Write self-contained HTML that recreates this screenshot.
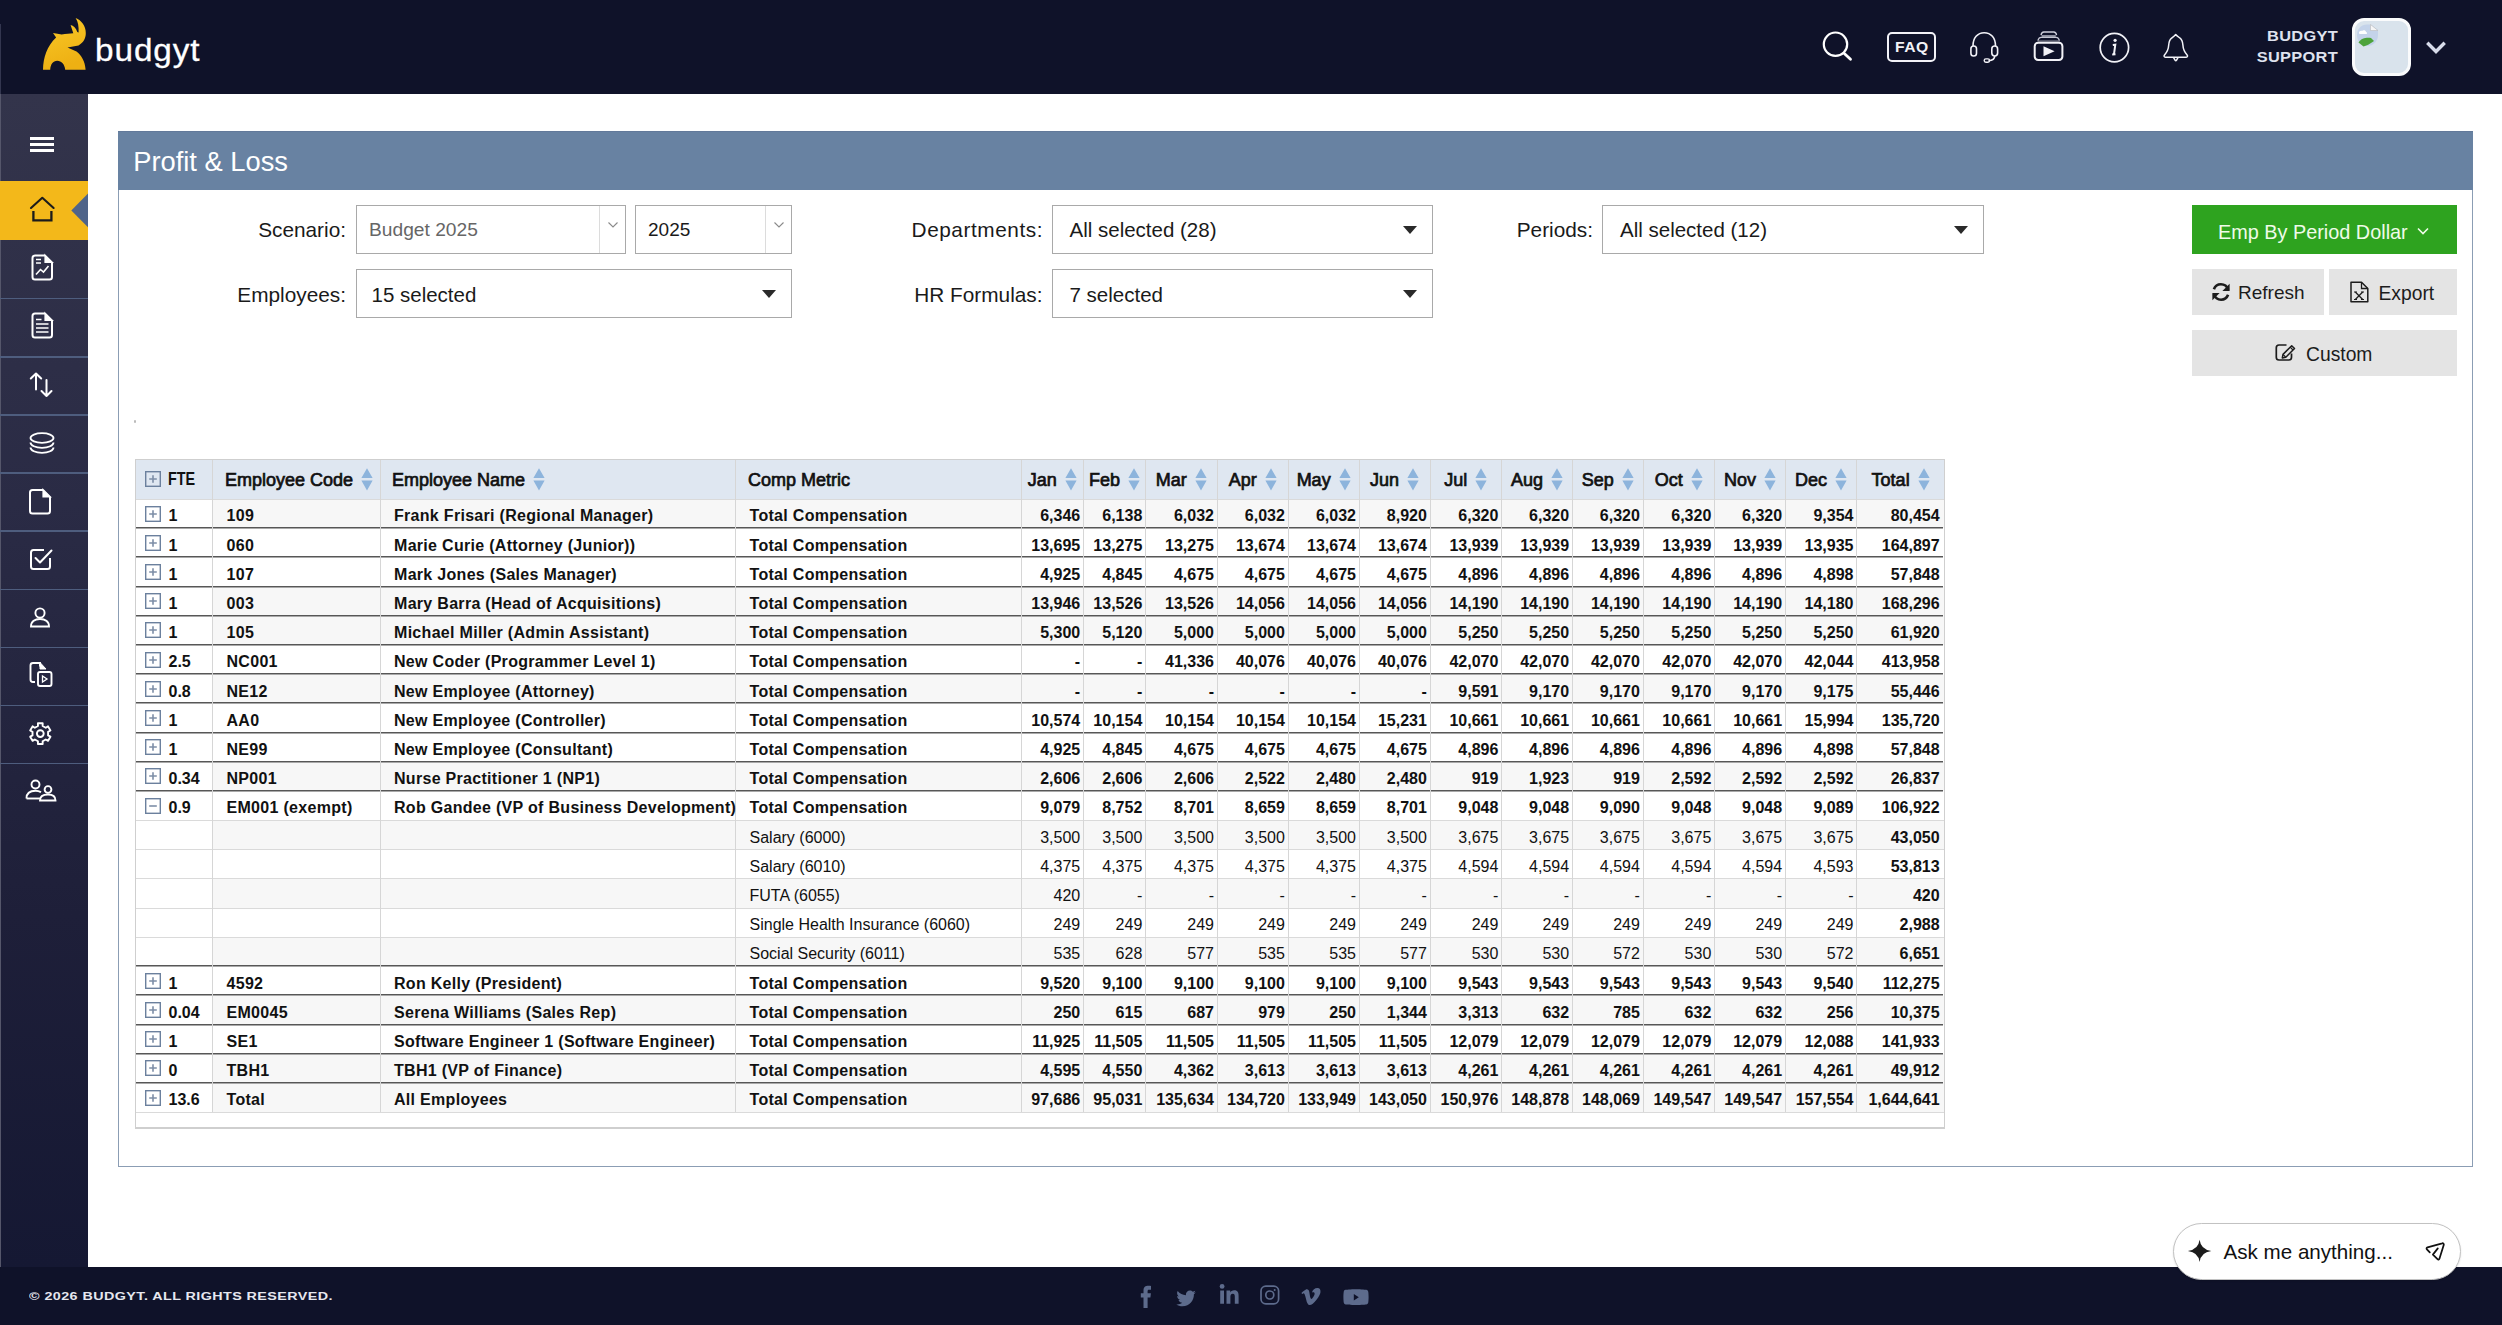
<!DOCTYPE html>
<html><head><meta charset="utf-8"><title>Budgyt - Profit &amp; Loss</title>
<style>
*{margin:0;padding:0;box-sizing:border-box}
html,body{width:2502px;height:1325px;overflow:hidden;background:#fff}
body{position:relative;font-family:"Liberation Sans",sans-serif;color:#111}
.a{position:absolute}
svg{display:block}
#hdr{left:0;top:0;width:2502px;height:94.3px;background:#0f1229}
#side{left:0;top:94.3px;width:88px;height:1172.7px;background:linear-gradient(180deg,#33344b 0%,#2a2b45 35%,#1e1f39 70%,#151833 100%)}
#sideedge{left:0;top:94.3px;width:1.3px;height:1172.7px;background:#55566a}
#foot{left:0;top:1267px;width:2502px;height:58px;background:#0f1229}
.sep{left:0;width:88px;height:1.5px;background:#4e5d7e}
.logo-t{left:94.5px;top:30px;font-size:32px;color:#fff;letter-spacing:0.9px;-webkit-text-stroke:0.3px #fff;line-height:40px;transform-origin:0 0;transform:scaleX(1.04)}
.uname{font-weight:700;font-size:14px;color:#dfe2ee;letter-spacing:0.25px;text-align:right;line-height:16px;transform-origin:100% 0;transform:scaleX(1.17)}
.panel{left:118px;top:131px;width:2355px;height:1035.5px;border:1.5px solid #8b9db4;border-top:none}
.phead{left:118px;top:131px;width:2355px;height:59px;background:#6882a2;border-top:1px solid #62799a}
.ptitle{left:133.2px;top:141.5px;font-size:27.3px;color:#fff;line-height:40px}
.lbl{font-size:20.8px;color:#1a1a1a;text-align:right;line-height:48px;height:48px}
.box{border:1.5px solid #a9a9a9;background:#fff;height:48.6px}
.btxt{font-size:20.5px;color:#1a1a1a;line-height:45px;white-space:nowrap}
.tri{width:0;height:0;border-left:7.5px solid transparent;border-right:7.5px solid transparent;border-top:8.5px solid #2a2a2a}
.btn{background:#e4e4e4;color:#1c1c1c;font-size:19.2px;line-height:46px;white-space:nowrap}
.tbox{border:1.5px solid #cfcfcf;border-bottom-width:2px;background:#fff}
.thead{background:#dfe7f1}
.rbg{background:#f7f7f7}
.lline{height:1px;background:#dadada}
.dline{height:1px;background:#575757;box-shadow:0 1px 0 #a9a9a9}
.vline{width:1px;background:#d6d6d6}
.hcell{display:flex;align-items:center;white-space:nowrap;font-size:18px;color:#111}
.hcell span{-webkit-text-stroke:0.7px #111}
.hcell .si{margin-left:8px;margin-top:-3px}
.hc{justify-content:center}
.fte{font-size:17.5px;margin-left:7px;font-weight:700;display:inline-block;transform-origin:0 50%;transform:scaleX(0.82);margin-top:-2px}
.cell{white-space:nowrap;font-size:16px;color:#111}
.cell.b{font-weight:700}
.cell.tx.b{letter-spacing:0.3px}
.num{text-align:right}
.xb{display:inline-block !important;vertical-align:middle;margin-top:-7px}
.ft{margin-left:7.5px}
.xb.hx{margin-top:-4px}
.soc{fill:#5d6b8c}
</style></head><body>
<!-- HEADER -->
<div id="hdr" class="a"></div>
<div class="a" style="left:0;top:24px;width:1.3px;height:70.3px;background:#33364f"></div>
<svg class="a" style="left:38px;top:14px" width="54" height="60" viewBox="0 0 54 60">
<defs><linearGradient id="lg" x1="0" y1="0" x2="0.3" y2="1"><stop offset="0" stop-color="#f9c928"/><stop offset="1" stop-color="#eeb013"/></linearGradient></defs>
<path d="M5,55.7 C5.2,44 9,32 18.1,23.6 L15,19 C18,19.4 21,19.9 23.6,20.4 C28,19.8 32,19.4 35.3,19.2 L32.6,11.1 C35.5,11.8 38,14 39.3,18.1 L40.6,18.4 C40.8,13 40.2,8 37.6,4.1 C43.5,6.5 47.8,12 47.8,19 C47.8,24.5 45.5,28.5 40.5,31.5 L29.5,33.6 L38.5,37.6 C43.5,41.5 47,47.5 47.6,55.7 L27.2,55.7 C26.8,50.5 23.5,46.7 19.2,46.7 C15,46.7 12.4,50.5 12.2,55.7 Z" fill="url(#lg)"/>
</svg>
<div class="a logo-t">budgyt</div>

<!-- header icons -->
<svg class="a" style="left:1815px;top:25px" width="45" height="45" viewBox="0 0 45 45">
<circle cx="20.5" cy="19.2" r="11.7" fill="none" stroke="#fff" stroke-width="2.2"/>
<path d="M29.3 28.4 L35.5 34.3" stroke="#fff" stroke-width="2.8" stroke-linecap="round"/>
</svg>
<div class="a" style="left:1887.2px;top:31.9px;width:48.8px;height:29.7px;border:2.1px solid #f2f2f7;border-radius:5px"></div>
<div class="a" style="left:1895px;top:39.5px;font-size:14px;font-weight:700;color:#f2f2f7;letter-spacing:0.4px;line-height:14px;transform-origin:0 0;transform:scaleX(1.12)">FAQ</div>
<svg class="a" style="left:1965px;top:28px" width="38" height="38" viewBox="0 0 38 38">
<path d="M8 18 C8 10 12.5 4.7 19.2 4.7 C26 4.7 30.5 10 30.5 18" fill="none" stroke="#f2f2f7" stroke-width="1.6"/>
<rect x="5.9" y="18" width="5.6" height="10" rx="2.8" fill="none" stroke="#f2f2f7" stroke-width="1.6"/>
<rect x="26.8" y="18" width="5.8" height="10" rx="2.9" fill="none" stroke="#f2f2f7" stroke-width="1.6"/>
<path d="M29.7 28 C29.7 31 27 32.5 23.5 32.7" fill="none" stroke="#f2f2f7" stroke-width="1.6"/>
<rect x="19.2" y="30.9" width="5.4" height="3.4" rx="1.7" fill="none" stroke="#f2f2f7" stroke-width="1.4"/>
</svg>
<svg class="a" style="left:2030px;top:28px" width="38" height="38" viewBox="0 0 38 38">
<path d="M11.6 7 H25.8 V9.2 H11.6Z" fill="#8a8c9c"/><path d="M11 7.2 C11.4 5 12.3 4 13.8 4 H23.8 C25.3 4 26.2 5 26.6 7.2" fill="none" stroke="#cfd0dc" stroke-width="1.3"/>
<path d="M7.9 12.6 C8.4 10.4 9.3 9.3 11 9.3 H26.3 C28 9.3 28.9 10.4 29.4 12.6" fill="none" stroke="#c4c5d2" stroke-width="1.3"/><path d="M7.6 13 H29.8" stroke="#8a8c9c" stroke-width="1"/>
<rect x="4.7" y="14.8" width="27.7" height="17.2" rx="3.4" fill="none" stroke="#f2f2f7" stroke-width="2"/>
<path d="M13.5 18.3 L24.6 23.3 L13.5 28.3 Z" fill="#f2f2f7"/>
</svg>
<svg class="a" style="left:2096px;top:29px" width="38" height="38" viewBox="0 0 38 38">
<circle cx="18.4" cy="18.6" r="14.2" fill="none" stroke="#f2f2f7" stroke-width="1.7"/>
<circle cx="19.1" cy="11.3" r="1.6" fill="#f2f2f7"/>
<path d="M16.8 15.9 L19.3 15.6 L18 25.2 M16.2 25.5 L19.5 25.2" fill="none" stroke="#f2f2f7" stroke-width="2"/>
</svg>
<svg class="a" style="left:2160px;top:30px" width="32" height="36" viewBox="0 0 32 36">
<path d="M15.7 4.5 C14.6 5.9 13.2 6.9 11.6 8.1 C9.6 9.6 8.9 12 8.7 15 C8.5 19 7.5 21.6 4.5 25 C3.7 26 4.1 27.1 5.4 27.2 H26.2 C27.5 27.1 27.9 26 27.1 25 C24.1 21.6 23.1 19 22.9 15 C22.7 12 22 9.6 20 8.1 C18.4 6.9 16.9 5.9 15.7 4.5 Z" fill="none" stroke="#f2f2f7" stroke-width="1.5" stroke-linejoin="round"/>
<path d="M13.6 27.6 L15.2 30.4 C15.5 30.9 16.1 30.9 16.4 30.4 L18 27.6" fill="none" stroke="#f2f2f7" stroke-width="1.5" stroke-linejoin="round"/>
</svg>
<div class="a uname" style="left:2198px;width:140px;top:27.5px">BUDGYT</div>
<div class="a uname" style="left:2198px;width:140px;top:48.5px">SUPPORT</div>
<div class="a" style="left:2352px;top:17.5px;width:58.5px;height:58.5px;border:3.2px solid #fafbfc;border-radius:12px;background:#d9e3ec"></div>
<svg class="a" style="left:2354px;top:21px" width="30" height="30" viewBox="0 0 30 30">
<path d="M3 14 C3 8 7 3.5 13 3.5 L17 3.5 L24 9 L24 14 C24 20 19.5 25 13 25 C7 25 3 20 3 14Z" fill="#c4d3ea"/>
<path d="M16.5 3.5 L24 9.5 L16.5 9.5 Z" fill="#f6f6f6" stroke="#bbb" stroke-width="0.6"/>
<path d="M5 12 C5 10 7 9.5 8 10 C9 8.5 12 9 12 11 C13 11 13.5 12.5 12.5 13 H5.5 Z" fill="#fff"/>
<path d="M4.5 21.5 C7.5 17 12 16.5 17 17 L20 20 C16 23 12 25 9.5 25.5 Z" fill="#4da33b"/>
</svg>
<svg class="a" style="left:2420px;top:36px" width="32" height="24" viewBox="0 0 32 24">
<path d="M8.5 8 L16 15.5 L23.5 8" fill="none" stroke="#d8dcea" stroke-width="3.4" stroke-linecap="square"/>
</svg>

<!-- SIDEBAR -->
<div id="side" class="a"></div>
<div id="sideedge" class="a"></div>
<div class="a" style="left:30.2px;top:136.6px;width:24px;height:3.3px;background:#fff"></div>
<div class="a" style="left:30.2px;top:142.5px;width:24px;height:3.3px;background:#fff"></div>
<div class="a" style="left:30.2px;top:148.6px;width:24px;height:3.3px;background:#fff"></div>
<div class="a" style="left:0;top:181px;width:88px;height:58.5px;background:#f3b81a"></div>
<svg class="a" style="left:28px;top:194px" width="30" height="30" viewBox="0 0 30 30">
<path d="M3 14 L14.3 3.8 L25.6 14" fill="none" stroke="#1b1b1b" stroke-width="2.1" stroke-linecap="round" stroke-linejoin="round"/>
<path d="M5.4 17 V26.3 H23.4 V17" fill="none" stroke="#1b1b1b" stroke-width="2.3"/>
</svg>
<svg class="a" style="left:71px;top:193px" width="17" height="35" viewBox="0 0 17 35"><path d="M17 0.5 V34.3 L0.3 17.4 Z" fill="#4f6489"/></svg>
<div class="a sep" style="top:297.5px"></div>
<div class="a sep" style="top:356px"></div>
<div class="a sep" style="top:414px"></div>
<div class="a sep" style="top:472px"></div>
<div class="a sep" style="top:530px"></div>
<div class="a sep" style="top:588.5px"></div>
<div class="a sep" style="top:646.5px"></div>
<div class="a sep" style="top:704.5px"></div>
<div class="a sep" style="top:762.5px"></div>
<!-- sidebar icons -->
<svg class="a" style="left:28px;top:252px" width="30" height="30" viewBox="0 0 30 30" fill="none" stroke="#fff" stroke-width="2">
<path d="M17 3.5 H7 C5.3 3.5 4.5 4.3 4.5 6 V25 C4.5 26.7 5.3 27.5 7 27.5 H21.5 C23.2 27.5 24 26.7 24 25 V10.5"/>
<path d="M17 3 V10.5 H24.5 Z" fill="#fff" stroke-width="1.2"/>
<path d="M8 7.5 H13 M8 11 H13" stroke-width="1.6"/>
<path d="M8 22.5 L12.5 17.5 L15.5 20 L20.5 14" stroke-width="1.6"/>
</svg>
<svg class="a" style="left:28px;top:310px" width="30" height="30" viewBox="0 0 30 30" fill="none" stroke="#fff" stroke-width="2">
<path d="M17 3.5 H7 C5.3 3.5 4.5 4.3 4.5 6 V25 C4.5 26.7 5.3 27.5 7 27.5 H21.5 C23.2 27.5 24 26.7 24 25 V10.5"/>
<path d="M17 3 V10.5 H24.5 Z" fill="#fff" stroke-width="1.2"/>
<path d="M8 9.5 H13.5 M8 14 H20.5 M8 18 H20.5 M8 22 H20.5" stroke-width="1.6"/>
</svg>
<svg class="a" style="left:27px;top:370px" width="30" height="30" viewBox="0 0 30 30" fill="none" stroke="#fff" stroke-width="2" stroke-linecap="round" stroke-linejoin="round">
<path d="M9 3.5 V19.5 M3.8 8.5 L9 3.5 L14.2 8.5"/>
<path d="M19.5 10 V26 M14.5 21 L19.5 26 L24.5 21"/>
</svg>
<svg class="a" style="left:27px;top:429px" width="30" height="30" viewBox="0 0 30 30" fill="none" stroke="#fff" stroke-width="1.8">
<ellipse cx="15" cy="9" rx="11.5" ry="4.8"/>
<path d="M3.5 13.5 C3.5 16.5 8.5 18.8 15 18.8 C21.5 18.8 26.5 16.5 26.5 13.5"/>
<path d="M3.5 18.5 C3.5 21.5 8.5 23.8 15 23.8 C21.5 23.8 26.5 21.5 26.5 18.5"/>
</svg>
<svg class="a" style="left:27px;top:487px" width="30" height="30" viewBox="0 0 30 30" fill="none" stroke="#fff" stroke-width="2">
<path d="M16 3 H5.5 C4 3 3 4 3 5.5 V24 C3 25.5 4 26.5 5.5 26.5 H20.5 C22 26.5 23 25.5 23 24 V10"/>
<path d="M16 2.5 V10 H23.5 Z" fill="#fff" stroke-width="1.2"/>
</svg>
<svg class="a" style="left:27px;top:545px" width="30" height="30" viewBox="0 0 30 30" fill="none" stroke="#fff" stroke-width="2">
<path d="M23 13 V21.5 C23 23 22 24 20.5 24 H6.5 C5 24 4 23 4 21.5 V7.5 C4 6 5 5 6.5 5 H17"/>
<path d="M8.5 13 L13 17.5 L24.5 5.5" stroke-linecap="round" stroke-linejoin="round"/>
</svg>
<svg class="a" style="left:27px;top:603px" width="30" height="30" viewBox="0 0 30 30" fill="none" stroke="#fff" stroke-width="1.9">
<circle cx="13" cy="10" r="4.6"/>
<path d="M4 23.5 C4 18.5 8 16 13 16 C18 16 22 18.5 22 23.5 Z"/>
</svg>
<svg class="a" style="left:27px;top:660px" width="30" height="30" viewBox="0 0 30 30" fill="none" stroke="#fff" stroke-width="1.9">
<path d="M13 6.5 V3 H6 C4.5 3 3.5 4 3.5 5.5 V19.5 C3.5 21 4.5 22 6 22 H8"/>
<path d="M13 2.5 V9 H19 Z" fill="#fff" stroke-width="1"/>
<rect x="11" y="12" width="13.5" height="14" rx="2"/>
<path d="M15.5 16 L20 19 L15.5 22 Z" stroke-width="1.3"/>
</svg>
<svg class="a" style="left:26px;top:719px" width="30" height="30" viewBox="0 0 30 30" fill="none" stroke="#fff" stroke-width="1.9">
<path d="M11.96 6.95 L11.92 4.27 L16.68 4.27 L16.64 6.95 L19.76 8.75 L22.05 7.37 L24.44 11.50 L22.09 12.80 L22.09 16.40 L24.44 17.70 L22.05 21.83 L19.76 20.45 L16.64 22.25 L16.68 24.93 L11.92 24.93 L11.96 22.25 L8.84 20.45 L6.55 21.83 L4.16 17.70 L6.51 16.40 L6.51 12.80 L4.16 11.50 L6.55 7.37 L8.84 8.75 Z" stroke-linejoin="round"/>
<circle cx="14.3" cy="14.6" r="3.4"/>
</svg>
<svg class="a" style="left:24px;top:776px" width="34" height="30" viewBox="0 0 34 30" fill="none" stroke="#fff" stroke-width="1.9">
<circle cx="11.5" cy="8.5" r="4"/>
<path d="M2.5 22.5 C2.5 17.5 6 14.8 11.5 14.8 C14 14.8 15.5 15.4 17 16.2"/>
<path d="M2.5 22.5 H16"/>
<circle cx="24" cy="13.5" r="3.4"/>
<path d="M16 24.5 C16 20.5 19 18.5 24 18.5 C29 18.5 31.5 20.5 31.5 24.5 Z"/>
</svg>

<!-- MAIN PANEL -->
<div class="a panel"></div>
<div class="a phead"></div>
<div class="a ptitle">Profit &amp; Loss</div>

<!-- form row 1 -->
<div class="a lbl" style="left:200px;width:146px;top:205.5px">Scenario:</div>
<div class="a box" style="left:356px;top:205px;width:269.5px"></div>
<div class="a" style="left:599px;top:206px;width:1.2px;height:46.5px;background:#dcdcdc"></div>
<svg class="a" style="left:605.5px;top:220px" width="14" height="10" viewBox="0 0 14 10"><path d="M2.5 2.5 L7 7 L11.5 2.5" fill="none" stroke="#8a8a8a" stroke-width="1.1"/></svg>
<div class="a btxt" style="left:369px;top:207px;color:#666;font-size:19.2px">Budget 2025</div>
<div class="a box" style="left:635px;top:205px;width:157px"></div>
<div class="a" style="left:765px;top:206px;width:1.2px;height:46.5px;background:#dcdcdc"></div>
<svg class="a" style="left:771.5px;top:220px" width="14" height="10" viewBox="0 0 14 10"><path d="M2.5 2.5 L7 7 L11.5 2.5" fill="none" stroke="#8a8a8a" stroke-width="1.1"/></svg>
<div class="a btxt" style="left:648px;top:207px;font-size:19px">2025</div>

<div class="a lbl" style="left:860px;width:183px;top:205.5px;letter-spacing:0.55px">Departments:</div>
<div class="a box" style="left:1052px;top:205px;width:381px"></div>
<div class="a btxt" style="left:1069.5px;top:207px">All selected (28)</div>
<div class="a tri" style="left:1402.7px;top:226.2px"></div>

<div class="a lbl" style="left:1450px;width:143px;top:205.5px">Periods:</div>
<div class="a box" style="left:1602px;top:205px;width:382px"></div>
<div class="a btxt" style="left:1620px;top:207px">All selected (12)</div>
<div class="a tri" style="left:1953.6px;top:226.2px"></div>

<!-- form row 2 -->
<div class="a lbl" style="left:200px;width:146px;top:270.5px">Employees:</div>
<div class="a box" style="left:356px;top:269px;width:436px"></div>
<div class="a btxt" style="left:371.5px;top:272px">15 selected</div>
<div class="a tri" style="left:761.7px;top:290.4px"></div>

<div class="a lbl" style="left:860px;width:182.5px;top:270.5px">HR Formulas:</div>
<div class="a box" style="left:1052px;top:269px;width:381px"></div>
<div class="a btxt" style="left:1069.5px;top:272px">7 selected</div>
<div class="a tri" style="left:1402.7px;top:290.4px"></div>

<!-- buttons -->
<div class="a" style="left:2192.2px;top:205.2px;width:265px;height:48.5px;background:#2ea31f"></div>
<div class="a" style="left:2218px;top:208.7px;font-size:19.85px;color:#effbe9;line-height:47px;white-space:nowrap">Emp By Period Dollar</div>
<svg class="a" style="left:2415px;top:225px" width="16" height="12" viewBox="0 0 16 12"><path d="M3 3.5 L8 8.5 L13 3.5" fill="none" stroke="#effbe9" stroke-width="1.6"/></svg>

<div class="a btn" style="left:2192.2px;top:269.2px;width:132.2px;height:46.1px"></div>
<svg class="a" style="left:2210px;top:281px" width="22" height="22" viewBox="0 0 22 22">
<path d="M18.2 8.6 C17 5.3 14.2 3.3 10.9 3.3 C7.7 3.3 5 5.3 3.9 8.2" fill="none" stroke="#1c1c1c" stroke-width="2.6"/>
<path d="M19.6 2.8 V10 H12.4 Z" fill="#1c1c1c"/>
<path d="M3.8 13.4 C5 16.7 7.8 18.7 11.1 18.7 C14.3 18.7 17 16.7 18.1 13.8" fill="none" stroke="#1c1c1c" stroke-width="2.6"/>
<path d="M2.4 19.2 V12 H9.6 Z" fill="#1c1c1c"/>
</svg>
<div class="a" style="left:2238px;top:270px;font-size:19px;color:#1c1c1c;line-height:46px">Refresh</div>

<div class="a btn" style="left:2328.5px;top:269.2px;width:128.7px;height:46.1px"></div>
<svg class="a" style="left:2348px;top:280px" width="22" height="24" viewBox="0 0 22 24">
<path d="M3 2.2 H13.5 L19.8 8.5 V21.8 H3 Z" fill="none" stroke="#1c1c1c" stroke-width="1.5" stroke-linejoin="round"/>
<path d="M13.5 2.2 V8.5 H19.8" fill="none" stroke="#1c1c1c" stroke-width="1.3"/>
<path d="M7.3 12 L14.7 19.5 M14.7 12 L7.3 19.5" stroke="#1c1c1c" stroke-width="1.3"/>
<path d="M6 12 H9 M13 12 H16 M6 19.5 H9 M13 19.5 H16" stroke="#1c1c1c" stroke-width="1"/>
</svg>
<div class="a" style="left:2378.5px;top:270.8px;font-size:19.3px;color:#1c1c1c;line-height:46px">Export</div>

<div class="a btn" style="left:2192.2px;top:330px;width:265px;height:46.4px"></div>
<svg class="a" style="left:2274px;top:342px" width="24" height="22" viewBox="0 0 24 22">
<path d="M12.5 3 H5 C3.2 3 2.3 3.9 2.3 5.7 V15.3 C2.3 17.1 3.2 18 5 18 H14.8 C16.6 18 17.5 17.1 17.5 15.3 V11.5" fill="none" stroke="#1c1c1c" stroke-width="1.7"/>
<path d="M8.3 15.9 L9 12.4 L17.7 3.7 L20.5 6.5 L11.8 15.2 Z" fill="none" stroke="#1c1c1c" stroke-width="1.5" stroke-linejoin="round"/>
<path d="M16.2 5.2 L19 8 M9.2 12.6 L11.6 15" stroke="#1c1c1c" stroke-width="1.2"/>
</svg>
<div class="a" style="left:2306px;top:331.5px;font-size:19.3px;color:#1c1c1c;line-height:46.4px">Custom</div>

<div class="a" style="left:133.5px;top:420px;width:2.5px;height:2.5px;background:#bbb;border-radius:1px"></div>

<!-- TABLE -->
<div class="a tbox" style="left:134.5px;top:459.3px;width:1810.1px;height:670.2px"></div>
<div class="a thead" style="left:135.5px;top:460.3px;width:1808.1px;height:39px"></div>
<div class="a rbg" style="left:212.4px;top:499.3px;width:1731.2px;height:29.2px"></div>
<div class="a rbg" style="left:212.4px;top:586.9px;width:1731.2px;height:29.2px"></div>
<div class="a rbg" style="left:212.4px;top:616.1px;width:1731.2px;height:29.2px"></div>
<div class="a rbg" style="left:212.4px;top:674.5px;width:1731.2px;height:29.2px"></div>
<div class="a rbg" style="left:212.4px;top:762.1px;width:1731.2px;height:29.2px"></div>
<div class="a rbg" style="left:212.4px;top:820.5px;width:1731.2px;height:29.2px"></div>
<div class="a rbg" style="left:212.4px;top:878.9px;width:1731.2px;height:29.2px"></div>
<div class="a rbg" style="left:212.4px;top:937.3px;width:1731.2px;height:29.2px"></div>
<div class="a rbg" style="left:212.4px;top:995.7px;width:1731.2px;height:29.2px"></div>
<div class="a rbg" style="left:212.4px;top:1054.1px;width:1731.2px;height:29.2px"></div>
<div class="a rbg" style="left:212.4px;top:1083.3px;width:1731.2px;height:29.2px"></div>
<div class="a lline" style="left:135.5px;top:498.8px;width:1808.1px"></div>
<div class="a dline" style="left:135.5px;top:527px;width:1807.1px"></div>
<div class="a dline" style="left:135.5px;top:556px;width:1807.1px"></div>
<div class="a dline" style="left:135.5px;top:586px;width:1807.1px"></div>
<div class="a dline" style="left:135.5px;top:615px;width:1807.1px"></div>
<div class="a dline" style="left:135.5px;top:644px;width:1807.1px"></div>
<div class="a dline" style="left:135.5px;top:673px;width:1807.1px"></div>
<div class="a dline" style="left:135.5px;top:702px;width:1807.1px"></div>
<div class="a dline" style="left:135.5px;top:732px;width:1807.1px"></div>
<div class="a dline" style="left:135.5px;top:761px;width:1807.1px"></div>
<div class="a dline" style="left:135.5px;top:790px;width:1807.1px"></div>
<div class="a lline" style="left:135.5px;top:820px;width:1808.1px"></div>
<div class="a lline" style="left:135.5px;top:849.2px;width:1808.1px"></div>
<div class="a lline" style="left:135.5px;top:878.4px;width:1808.1px"></div>
<div class="a lline" style="left:135.5px;top:907.6px;width:1808.1px"></div>
<div class="a lline" style="left:135.5px;top:936.8px;width:1808.1px"></div>
<div class="a dline" style="left:135.5px;top:965px;width:1807.1px"></div>
<div class="a dline" style="left:135.5px;top:994px;width:1807.1px"></div>
<div class="a dline" style="left:135.5px;top:1024px;width:1807.1px"></div>
<div class="a dline" style="left:135.5px;top:1053px;width:1807.1px"></div>
<div class="a dline" style="left:135.5px;top:1082px;width:1807.1px"></div>
<div class="a lline" style="left:135.5px;top:1112px;width:1808.1px"></div>
<div class="a vline" style="left:211.9px;top:460.3px;height:652.2px"></div>
<div class="a vline" style="left:379.5px;top:460.3px;height:652.2px"></div>
<div class="a vline" style="left:734.9px;top:460.3px;height:652.2px"></div>
<div class="a vline" style="left:1020.8px;top:460.3px;height:652.2px"></div>
<div class="a vline" style="left:1082.9px;top:460.3px;height:652.2px"></div>
<div class="a vline" style="left:1145px;top:460.3px;height:652.2px"></div>
<div class="a vline" style="left:1216.7px;top:460.3px;height:652.2px"></div>
<div class="a vline" style="left:1287.6px;top:460.3px;height:652.2px"></div>
<div class="a vline" style="left:1358.7px;top:460.3px;height:652.2px"></div>
<div class="a vline" style="left:1429.6px;top:460.3px;height:652.2px"></div>
<div class="a vline" style="left:1501.1px;top:460.3px;height:652.2px"></div>
<div class="a vline" style="left:1571.8px;top:460.3px;height:652.2px"></div>
<div class="a vline" style="left:1642.6px;top:460.3px;height:652.2px"></div>
<div class="a vline" style="left:1714px;top:460.3px;height:652.2px"></div>
<div class="a vline" style="left:1784.8px;top:460.3px;height:652.2px"></div>
<div class="a vline" style="left:1856.2px;top:460.3px;height:652.2px"></div>
<div class="a hcell" style="left:145px;top:460.8px;height:40px"><svg class="xb hx" width="16" height="16" viewBox="0 0 16 16"><rect x="0.7" y="0.7" width="14.6" height="14.6" fill="none" stroke="#6b809d" stroke-width="1.4"/><path d="M4.2 8H11.8M8 4.2V11.8" stroke="#7d8ea7" stroke-width="1.6"/></svg><b class="fte">FTE</b></div>
<div class="a hcell" style="left:225px;top:460.8px;height:40px"><span>Employee Code</span><svg class="si" width="12" height="23" viewBox="0 0 12 23"><path d="M6 0.3L11.6 10H0.4Z M0.4 12.6H11.6L6 22.5Z" fill="#8db4dc"/></svg></div>
<div class="a hcell" style="left:392px;top:460.8px;height:40px"><span>Employee Name</span><svg class="si" width="12" height="23" viewBox="0 0 12 23"><path d="M6 0.3L11.6 10H0.4Z M0.4 12.6H11.6L6 22.5Z" fill="#8db4dc"/></svg></div>
<div class="a hcell" style="left:748px;top:460.8px;height:40px"><span>Comp Metric</span></div>
<div class="a hcell hc" style="left:1021.3px;width:62.1px;top:460.8px;height:40px"><span>Jan</span><svg class="si" width="12" height="23" viewBox="0 0 12 23"><path d="M6 0.3L11.6 10H0.4Z M0.4 12.6H11.6L6 22.5Z" fill="#8db4dc"/></svg></div>
<div class="a hcell hc" style="left:1083.4px;width:62.1px;top:460.8px;height:40px"><span>Feb</span><svg class="si" width="12" height="23" viewBox="0 0 12 23"><path d="M6 0.3L11.6 10H0.4Z M0.4 12.6H11.6L6 22.5Z" fill="#8db4dc"/></svg></div>
<div class="a hcell hc" style="left:1145.5px;width:71.7px;top:460.8px;height:40px"><span>Mar</span><svg class="si" width="12" height="23" viewBox="0 0 12 23"><path d="M6 0.3L11.6 10H0.4Z M0.4 12.6H11.6L6 22.5Z" fill="#8db4dc"/></svg></div>
<div class="a hcell hc" style="left:1217.2px;width:70.9px;top:460.8px;height:40px"><span>Apr</span><svg class="si" width="12" height="23" viewBox="0 0 12 23"><path d="M6 0.3L11.6 10H0.4Z M0.4 12.6H11.6L6 22.5Z" fill="#8db4dc"/></svg></div>
<div class="a hcell hc" style="left:1288.1px;width:71.1px;top:460.8px;height:40px"><span>May</span><svg class="si" width="12" height="23" viewBox="0 0 12 23"><path d="M6 0.3L11.6 10H0.4Z M0.4 12.6H11.6L6 22.5Z" fill="#8db4dc"/></svg></div>
<div class="a hcell hc" style="left:1359.2px;width:70.9px;top:460.8px;height:40px"><span>Jun</span><svg class="si" width="12" height="23" viewBox="0 0 12 23"><path d="M6 0.3L11.6 10H0.4Z M0.4 12.6H11.6L6 22.5Z" fill="#8db4dc"/></svg></div>
<div class="a hcell hc" style="left:1430.1px;width:71.5px;top:460.8px;height:40px"><span>Jul</span><svg class="si" width="12" height="23" viewBox="0 0 12 23"><path d="M6 0.3L11.6 10H0.4Z M0.4 12.6H11.6L6 22.5Z" fill="#8db4dc"/></svg></div>
<div class="a hcell hc" style="left:1501.6px;width:70.7px;top:460.8px;height:40px"><span>Aug</span><svg class="si" width="12" height="23" viewBox="0 0 12 23"><path d="M6 0.3L11.6 10H0.4Z M0.4 12.6H11.6L6 22.5Z" fill="#8db4dc"/></svg></div>
<div class="a hcell hc" style="left:1572.3px;width:70.8px;top:460.8px;height:40px"><span>Sep</span><svg class="si" width="12" height="23" viewBox="0 0 12 23"><path d="M6 0.3L11.6 10H0.4Z M0.4 12.6H11.6L6 22.5Z" fill="#8db4dc"/></svg></div>
<div class="a hcell hc" style="left:1643.1px;width:71.4px;top:460.8px;height:40px"><span>Oct</span><svg class="si" width="12" height="23" viewBox="0 0 12 23"><path d="M6 0.3L11.6 10H0.4Z M0.4 12.6H11.6L6 22.5Z" fill="#8db4dc"/></svg></div>
<div class="a hcell hc" style="left:1714.5px;width:70.8px;top:460.8px;height:40px"><span>Nov</span><svg class="si" width="12" height="23" viewBox="0 0 12 23"><path d="M6 0.3L11.6 10H0.4Z M0.4 12.6H11.6L6 22.5Z" fill="#8db4dc"/></svg></div>
<div class="a hcell hc" style="left:1785.3px;width:71.4px;top:460.8px;height:40px"><span>Dec</span><svg class="si" width="12" height="23" viewBox="0 0 12 23"><path d="M6 0.3L11.6 10H0.4Z M0.4 12.6H11.6L6 22.5Z" fill="#8db4dc"/></svg></div>
<div class="a hcell hc" style="left:1856.7px;width:87.9px;top:460.8px;height:40px"><span>Total</span><svg class="si" width="12" height="23" viewBox="0 0 12 23"><path d="M6 0.3L11.6 10H0.4Z M0.4 12.6H11.6L6 22.5Z" fill="#8db4dc"/></svg></div>
<div class="a cell b" style="left:145px;top:501.3px;height:29.2px;line-height:29.2px"><svg class="xb" width="16" height="16" viewBox="0 0 16 16"><rect x="0.7" y="0.7" width="14.6" height="14.6" fill="none" stroke="#6b809d" stroke-width="1.4"/><path d="M4.2 8H11.8M8 4.2V11.8" stroke="#7d8ea7" stroke-width="1.6"/></svg><span class="ft">1</span></div>
<div class="a cell b tx" style="left:226.5px;top:501.3px;height:29.2px;line-height:29.2px">109</div>
<div class="a cell b tx" style="left:394px;top:501.3px;height:29.2px;line-height:29.2px">Frank Frisari (Regional Manager)</div>
<div class="a cell b tx" style="left:749.5px;top:501.3px;height:29.2px;line-height:29.2px">Total Compensation</div>
<div class="a cell b num" style="left:1021.3px;width:58.9px;top:501.3px;height:29.2px;line-height:29.2px">6,346</div>
<div class="a cell b num" style="left:1083.4px;width:58.9px;top:501.3px;height:29.2px;line-height:29.2px">6,138</div>
<div class="a cell b num" style="left:1145.5px;width:68.5px;top:501.3px;height:29.2px;line-height:29.2px">6,032</div>
<div class="a cell b num" style="left:1217.2px;width:67.7px;top:501.3px;height:29.2px;line-height:29.2px">6,032</div>
<div class="a cell b num" style="left:1288.1px;width:67.9px;top:501.3px;height:29.2px;line-height:29.2px">6,032</div>
<div class="a cell b num" style="left:1359.2px;width:67.7px;top:501.3px;height:29.2px;line-height:29.2px">8,920</div>
<div class="a cell b num" style="left:1430.1px;width:68.3px;top:501.3px;height:29.2px;line-height:29.2px">6,320</div>
<div class="a cell b num" style="left:1501.6px;width:67.5px;top:501.3px;height:29.2px;line-height:29.2px">6,320</div>
<div class="a cell b num" style="left:1572.3px;width:67.6px;top:501.3px;height:29.2px;line-height:29.2px">6,320</div>
<div class="a cell b num" style="left:1643.1px;width:68.2px;top:501.3px;height:29.2px;line-height:29.2px">6,320</div>
<div class="a cell b num" style="left:1714.5px;width:67.6px;top:501.3px;height:29.2px;line-height:29.2px">6,320</div>
<div class="a cell b num" style="left:1785.3px;width:68.2px;top:501.3px;height:29.2px;line-height:29.2px">9,354</div>
<div class="a cell b num" style="left:1856.7px;width:82.9px;top:501.3px;height:29.2px;line-height:29.2px">80,454</div>
<div class="a cell b" style="left:145px;top:530.5px;height:29.2px;line-height:29.2px"><svg class="xb" width="16" height="16" viewBox="0 0 16 16"><rect x="0.7" y="0.7" width="14.6" height="14.6" fill="none" stroke="#6b809d" stroke-width="1.4"/><path d="M4.2 8H11.8M8 4.2V11.8" stroke="#7d8ea7" stroke-width="1.6"/></svg><span class="ft">1</span></div>
<div class="a cell b tx" style="left:226.5px;top:530.5px;height:29.2px;line-height:29.2px">060</div>
<div class="a cell b tx" style="left:394px;top:530.5px;height:29.2px;line-height:29.2px">Marie Curie (Attorney (Junior))</div>
<div class="a cell b tx" style="left:749.5px;top:530.5px;height:29.2px;line-height:29.2px">Total Compensation</div>
<div class="a cell b num" style="left:1021.3px;width:58.9px;top:530.5px;height:29.2px;line-height:29.2px">13,695</div>
<div class="a cell b num" style="left:1083.4px;width:58.9px;top:530.5px;height:29.2px;line-height:29.2px">13,275</div>
<div class="a cell b num" style="left:1145.5px;width:68.5px;top:530.5px;height:29.2px;line-height:29.2px">13,275</div>
<div class="a cell b num" style="left:1217.2px;width:67.7px;top:530.5px;height:29.2px;line-height:29.2px">13,674</div>
<div class="a cell b num" style="left:1288.1px;width:67.9px;top:530.5px;height:29.2px;line-height:29.2px">13,674</div>
<div class="a cell b num" style="left:1359.2px;width:67.7px;top:530.5px;height:29.2px;line-height:29.2px">13,674</div>
<div class="a cell b num" style="left:1430.1px;width:68.3px;top:530.5px;height:29.2px;line-height:29.2px">13,939</div>
<div class="a cell b num" style="left:1501.6px;width:67.5px;top:530.5px;height:29.2px;line-height:29.2px">13,939</div>
<div class="a cell b num" style="left:1572.3px;width:67.6px;top:530.5px;height:29.2px;line-height:29.2px">13,939</div>
<div class="a cell b num" style="left:1643.1px;width:68.2px;top:530.5px;height:29.2px;line-height:29.2px">13,939</div>
<div class="a cell b num" style="left:1714.5px;width:67.6px;top:530.5px;height:29.2px;line-height:29.2px">13,939</div>
<div class="a cell b num" style="left:1785.3px;width:68.2px;top:530.5px;height:29.2px;line-height:29.2px">13,935</div>
<div class="a cell b num" style="left:1856.7px;width:82.9px;top:530.5px;height:29.2px;line-height:29.2px">164,897</div>
<div class="a cell b" style="left:145px;top:559.7px;height:29.2px;line-height:29.2px"><svg class="xb" width="16" height="16" viewBox="0 0 16 16"><rect x="0.7" y="0.7" width="14.6" height="14.6" fill="none" stroke="#6b809d" stroke-width="1.4"/><path d="M4.2 8H11.8M8 4.2V11.8" stroke="#7d8ea7" stroke-width="1.6"/></svg><span class="ft">1</span></div>
<div class="a cell b tx" style="left:226.5px;top:559.7px;height:29.2px;line-height:29.2px">107</div>
<div class="a cell b tx" style="left:394px;top:559.7px;height:29.2px;line-height:29.2px">Mark Jones (Sales Manager)</div>
<div class="a cell b tx" style="left:749.5px;top:559.7px;height:29.2px;line-height:29.2px">Total Compensation</div>
<div class="a cell b num" style="left:1021.3px;width:58.9px;top:559.7px;height:29.2px;line-height:29.2px">4,925</div>
<div class="a cell b num" style="left:1083.4px;width:58.9px;top:559.7px;height:29.2px;line-height:29.2px">4,845</div>
<div class="a cell b num" style="left:1145.5px;width:68.5px;top:559.7px;height:29.2px;line-height:29.2px">4,675</div>
<div class="a cell b num" style="left:1217.2px;width:67.7px;top:559.7px;height:29.2px;line-height:29.2px">4,675</div>
<div class="a cell b num" style="left:1288.1px;width:67.9px;top:559.7px;height:29.2px;line-height:29.2px">4,675</div>
<div class="a cell b num" style="left:1359.2px;width:67.7px;top:559.7px;height:29.2px;line-height:29.2px">4,675</div>
<div class="a cell b num" style="left:1430.1px;width:68.3px;top:559.7px;height:29.2px;line-height:29.2px">4,896</div>
<div class="a cell b num" style="left:1501.6px;width:67.5px;top:559.7px;height:29.2px;line-height:29.2px">4,896</div>
<div class="a cell b num" style="left:1572.3px;width:67.6px;top:559.7px;height:29.2px;line-height:29.2px">4,896</div>
<div class="a cell b num" style="left:1643.1px;width:68.2px;top:559.7px;height:29.2px;line-height:29.2px">4,896</div>
<div class="a cell b num" style="left:1714.5px;width:67.6px;top:559.7px;height:29.2px;line-height:29.2px">4,896</div>
<div class="a cell b num" style="left:1785.3px;width:68.2px;top:559.7px;height:29.2px;line-height:29.2px">4,898</div>
<div class="a cell b num" style="left:1856.7px;width:82.9px;top:559.7px;height:29.2px;line-height:29.2px">57,848</div>
<div class="a cell b" style="left:145px;top:588.9px;height:29.2px;line-height:29.2px"><svg class="xb" width="16" height="16" viewBox="0 0 16 16"><rect x="0.7" y="0.7" width="14.6" height="14.6" fill="none" stroke="#6b809d" stroke-width="1.4"/><path d="M4.2 8H11.8M8 4.2V11.8" stroke="#7d8ea7" stroke-width="1.6"/></svg><span class="ft">1</span></div>
<div class="a cell b tx" style="left:226.5px;top:588.9px;height:29.2px;line-height:29.2px">003</div>
<div class="a cell b tx" style="left:394px;top:588.9px;height:29.2px;line-height:29.2px">Mary Barra (Head of Acquisitions)</div>
<div class="a cell b tx" style="left:749.5px;top:588.9px;height:29.2px;line-height:29.2px">Total Compensation</div>
<div class="a cell b num" style="left:1021.3px;width:58.9px;top:588.9px;height:29.2px;line-height:29.2px">13,946</div>
<div class="a cell b num" style="left:1083.4px;width:58.9px;top:588.9px;height:29.2px;line-height:29.2px">13,526</div>
<div class="a cell b num" style="left:1145.5px;width:68.5px;top:588.9px;height:29.2px;line-height:29.2px">13,526</div>
<div class="a cell b num" style="left:1217.2px;width:67.7px;top:588.9px;height:29.2px;line-height:29.2px">14,056</div>
<div class="a cell b num" style="left:1288.1px;width:67.9px;top:588.9px;height:29.2px;line-height:29.2px">14,056</div>
<div class="a cell b num" style="left:1359.2px;width:67.7px;top:588.9px;height:29.2px;line-height:29.2px">14,056</div>
<div class="a cell b num" style="left:1430.1px;width:68.3px;top:588.9px;height:29.2px;line-height:29.2px">14,190</div>
<div class="a cell b num" style="left:1501.6px;width:67.5px;top:588.9px;height:29.2px;line-height:29.2px">14,190</div>
<div class="a cell b num" style="left:1572.3px;width:67.6px;top:588.9px;height:29.2px;line-height:29.2px">14,190</div>
<div class="a cell b num" style="left:1643.1px;width:68.2px;top:588.9px;height:29.2px;line-height:29.2px">14,190</div>
<div class="a cell b num" style="left:1714.5px;width:67.6px;top:588.9px;height:29.2px;line-height:29.2px">14,190</div>
<div class="a cell b num" style="left:1785.3px;width:68.2px;top:588.9px;height:29.2px;line-height:29.2px">14,180</div>
<div class="a cell b num" style="left:1856.7px;width:82.9px;top:588.9px;height:29.2px;line-height:29.2px">168,296</div>
<div class="a cell b" style="left:145px;top:618.1px;height:29.2px;line-height:29.2px"><svg class="xb" width="16" height="16" viewBox="0 0 16 16"><rect x="0.7" y="0.7" width="14.6" height="14.6" fill="none" stroke="#6b809d" stroke-width="1.4"/><path d="M4.2 8H11.8M8 4.2V11.8" stroke="#7d8ea7" stroke-width="1.6"/></svg><span class="ft">1</span></div>
<div class="a cell b tx" style="left:226.5px;top:618.1px;height:29.2px;line-height:29.2px">105</div>
<div class="a cell b tx" style="left:394px;top:618.1px;height:29.2px;line-height:29.2px">Michael Miller (Admin Assistant)</div>
<div class="a cell b tx" style="left:749.5px;top:618.1px;height:29.2px;line-height:29.2px">Total Compensation</div>
<div class="a cell b num" style="left:1021.3px;width:58.9px;top:618.1px;height:29.2px;line-height:29.2px">5,300</div>
<div class="a cell b num" style="left:1083.4px;width:58.9px;top:618.1px;height:29.2px;line-height:29.2px">5,120</div>
<div class="a cell b num" style="left:1145.5px;width:68.5px;top:618.1px;height:29.2px;line-height:29.2px">5,000</div>
<div class="a cell b num" style="left:1217.2px;width:67.7px;top:618.1px;height:29.2px;line-height:29.2px">5,000</div>
<div class="a cell b num" style="left:1288.1px;width:67.9px;top:618.1px;height:29.2px;line-height:29.2px">5,000</div>
<div class="a cell b num" style="left:1359.2px;width:67.7px;top:618.1px;height:29.2px;line-height:29.2px">5,000</div>
<div class="a cell b num" style="left:1430.1px;width:68.3px;top:618.1px;height:29.2px;line-height:29.2px">5,250</div>
<div class="a cell b num" style="left:1501.6px;width:67.5px;top:618.1px;height:29.2px;line-height:29.2px">5,250</div>
<div class="a cell b num" style="left:1572.3px;width:67.6px;top:618.1px;height:29.2px;line-height:29.2px">5,250</div>
<div class="a cell b num" style="left:1643.1px;width:68.2px;top:618.1px;height:29.2px;line-height:29.2px">5,250</div>
<div class="a cell b num" style="left:1714.5px;width:67.6px;top:618.1px;height:29.2px;line-height:29.2px">5,250</div>
<div class="a cell b num" style="left:1785.3px;width:68.2px;top:618.1px;height:29.2px;line-height:29.2px">5,250</div>
<div class="a cell b num" style="left:1856.7px;width:82.9px;top:618.1px;height:29.2px;line-height:29.2px">61,920</div>
<div class="a cell b" style="left:145px;top:647.3px;height:29.2px;line-height:29.2px"><svg class="xb" width="16" height="16" viewBox="0 0 16 16"><rect x="0.7" y="0.7" width="14.6" height="14.6" fill="none" stroke="#6b809d" stroke-width="1.4"/><path d="M4.2 8H11.8M8 4.2V11.8" stroke="#7d8ea7" stroke-width="1.6"/></svg><span class="ft">2.5</span></div>
<div class="a cell b tx" style="left:226.5px;top:647.3px;height:29.2px;line-height:29.2px">NC001</div>
<div class="a cell b tx" style="left:394px;top:647.3px;height:29.2px;line-height:29.2px">New Coder (Programmer Level 1)</div>
<div class="a cell b tx" style="left:749.5px;top:647.3px;height:29.2px;line-height:29.2px">Total Compensation</div>
<div class="a cell b num" style="left:1021.3px;width:58.9px;top:647.3px;height:29.2px;line-height:29.2px">-</div>
<div class="a cell b num" style="left:1083.4px;width:58.9px;top:647.3px;height:29.2px;line-height:29.2px">-</div>
<div class="a cell b num" style="left:1145.5px;width:68.5px;top:647.3px;height:29.2px;line-height:29.2px">41,336</div>
<div class="a cell b num" style="left:1217.2px;width:67.7px;top:647.3px;height:29.2px;line-height:29.2px">40,076</div>
<div class="a cell b num" style="left:1288.1px;width:67.9px;top:647.3px;height:29.2px;line-height:29.2px">40,076</div>
<div class="a cell b num" style="left:1359.2px;width:67.7px;top:647.3px;height:29.2px;line-height:29.2px">40,076</div>
<div class="a cell b num" style="left:1430.1px;width:68.3px;top:647.3px;height:29.2px;line-height:29.2px">42,070</div>
<div class="a cell b num" style="left:1501.6px;width:67.5px;top:647.3px;height:29.2px;line-height:29.2px">42,070</div>
<div class="a cell b num" style="left:1572.3px;width:67.6px;top:647.3px;height:29.2px;line-height:29.2px">42,070</div>
<div class="a cell b num" style="left:1643.1px;width:68.2px;top:647.3px;height:29.2px;line-height:29.2px">42,070</div>
<div class="a cell b num" style="left:1714.5px;width:67.6px;top:647.3px;height:29.2px;line-height:29.2px">42,070</div>
<div class="a cell b num" style="left:1785.3px;width:68.2px;top:647.3px;height:29.2px;line-height:29.2px">42,044</div>
<div class="a cell b num" style="left:1856.7px;width:82.9px;top:647.3px;height:29.2px;line-height:29.2px">413,958</div>
<div class="a cell b" style="left:145px;top:676.5px;height:29.2px;line-height:29.2px"><svg class="xb" width="16" height="16" viewBox="0 0 16 16"><rect x="0.7" y="0.7" width="14.6" height="14.6" fill="none" stroke="#6b809d" stroke-width="1.4"/><path d="M4.2 8H11.8M8 4.2V11.8" stroke="#7d8ea7" stroke-width="1.6"/></svg><span class="ft">0.8</span></div>
<div class="a cell b tx" style="left:226.5px;top:676.5px;height:29.2px;line-height:29.2px">NE12</div>
<div class="a cell b tx" style="left:394px;top:676.5px;height:29.2px;line-height:29.2px">New Employee (Attorney)</div>
<div class="a cell b tx" style="left:749.5px;top:676.5px;height:29.2px;line-height:29.2px">Total Compensation</div>
<div class="a cell b num" style="left:1021.3px;width:58.9px;top:676.5px;height:29.2px;line-height:29.2px">-</div>
<div class="a cell b num" style="left:1083.4px;width:58.9px;top:676.5px;height:29.2px;line-height:29.2px">-</div>
<div class="a cell b num" style="left:1145.5px;width:68.5px;top:676.5px;height:29.2px;line-height:29.2px">-</div>
<div class="a cell b num" style="left:1217.2px;width:67.7px;top:676.5px;height:29.2px;line-height:29.2px">-</div>
<div class="a cell b num" style="left:1288.1px;width:67.9px;top:676.5px;height:29.2px;line-height:29.2px">-</div>
<div class="a cell b num" style="left:1359.2px;width:67.7px;top:676.5px;height:29.2px;line-height:29.2px">-</div>
<div class="a cell b num" style="left:1430.1px;width:68.3px;top:676.5px;height:29.2px;line-height:29.2px">9,591</div>
<div class="a cell b num" style="left:1501.6px;width:67.5px;top:676.5px;height:29.2px;line-height:29.2px">9,170</div>
<div class="a cell b num" style="left:1572.3px;width:67.6px;top:676.5px;height:29.2px;line-height:29.2px">9,170</div>
<div class="a cell b num" style="left:1643.1px;width:68.2px;top:676.5px;height:29.2px;line-height:29.2px">9,170</div>
<div class="a cell b num" style="left:1714.5px;width:67.6px;top:676.5px;height:29.2px;line-height:29.2px">9,170</div>
<div class="a cell b num" style="left:1785.3px;width:68.2px;top:676.5px;height:29.2px;line-height:29.2px">9,175</div>
<div class="a cell b num" style="left:1856.7px;width:82.9px;top:676.5px;height:29.2px;line-height:29.2px">55,446</div>
<div class="a cell b" style="left:145px;top:705.7px;height:29.2px;line-height:29.2px"><svg class="xb" width="16" height="16" viewBox="0 0 16 16"><rect x="0.7" y="0.7" width="14.6" height="14.6" fill="none" stroke="#6b809d" stroke-width="1.4"/><path d="M4.2 8H11.8M8 4.2V11.8" stroke="#7d8ea7" stroke-width="1.6"/></svg><span class="ft">1</span></div>
<div class="a cell b tx" style="left:226.5px;top:705.7px;height:29.2px;line-height:29.2px">AA0</div>
<div class="a cell b tx" style="left:394px;top:705.7px;height:29.2px;line-height:29.2px">New Employee (Controller)</div>
<div class="a cell b tx" style="left:749.5px;top:705.7px;height:29.2px;line-height:29.2px">Total Compensation</div>
<div class="a cell b num" style="left:1021.3px;width:58.9px;top:705.7px;height:29.2px;line-height:29.2px">10,574</div>
<div class="a cell b num" style="left:1083.4px;width:58.9px;top:705.7px;height:29.2px;line-height:29.2px">10,154</div>
<div class="a cell b num" style="left:1145.5px;width:68.5px;top:705.7px;height:29.2px;line-height:29.2px">10,154</div>
<div class="a cell b num" style="left:1217.2px;width:67.7px;top:705.7px;height:29.2px;line-height:29.2px">10,154</div>
<div class="a cell b num" style="left:1288.1px;width:67.9px;top:705.7px;height:29.2px;line-height:29.2px">10,154</div>
<div class="a cell b num" style="left:1359.2px;width:67.7px;top:705.7px;height:29.2px;line-height:29.2px">15,231</div>
<div class="a cell b num" style="left:1430.1px;width:68.3px;top:705.7px;height:29.2px;line-height:29.2px">10,661</div>
<div class="a cell b num" style="left:1501.6px;width:67.5px;top:705.7px;height:29.2px;line-height:29.2px">10,661</div>
<div class="a cell b num" style="left:1572.3px;width:67.6px;top:705.7px;height:29.2px;line-height:29.2px">10,661</div>
<div class="a cell b num" style="left:1643.1px;width:68.2px;top:705.7px;height:29.2px;line-height:29.2px">10,661</div>
<div class="a cell b num" style="left:1714.5px;width:67.6px;top:705.7px;height:29.2px;line-height:29.2px">10,661</div>
<div class="a cell b num" style="left:1785.3px;width:68.2px;top:705.7px;height:29.2px;line-height:29.2px">15,994</div>
<div class="a cell b num" style="left:1856.7px;width:82.9px;top:705.7px;height:29.2px;line-height:29.2px">135,720</div>
<div class="a cell b" style="left:145px;top:734.9px;height:29.2px;line-height:29.2px"><svg class="xb" width="16" height="16" viewBox="0 0 16 16"><rect x="0.7" y="0.7" width="14.6" height="14.6" fill="none" stroke="#6b809d" stroke-width="1.4"/><path d="M4.2 8H11.8M8 4.2V11.8" stroke="#7d8ea7" stroke-width="1.6"/></svg><span class="ft">1</span></div>
<div class="a cell b tx" style="left:226.5px;top:734.9px;height:29.2px;line-height:29.2px">NE99</div>
<div class="a cell b tx" style="left:394px;top:734.9px;height:29.2px;line-height:29.2px">New Employee (Consultant)</div>
<div class="a cell b tx" style="left:749.5px;top:734.9px;height:29.2px;line-height:29.2px">Total Compensation</div>
<div class="a cell b num" style="left:1021.3px;width:58.9px;top:734.9px;height:29.2px;line-height:29.2px">4,925</div>
<div class="a cell b num" style="left:1083.4px;width:58.9px;top:734.9px;height:29.2px;line-height:29.2px">4,845</div>
<div class="a cell b num" style="left:1145.5px;width:68.5px;top:734.9px;height:29.2px;line-height:29.2px">4,675</div>
<div class="a cell b num" style="left:1217.2px;width:67.7px;top:734.9px;height:29.2px;line-height:29.2px">4,675</div>
<div class="a cell b num" style="left:1288.1px;width:67.9px;top:734.9px;height:29.2px;line-height:29.2px">4,675</div>
<div class="a cell b num" style="left:1359.2px;width:67.7px;top:734.9px;height:29.2px;line-height:29.2px">4,675</div>
<div class="a cell b num" style="left:1430.1px;width:68.3px;top:734.9px;height:29.2px;line-height:29.2px">4,896</div>
<div class="a cell b num" style="left:1501.6px;width:67.5px;top:734.9px;height:29.2px;line-height:29.2px">4,896</div>
<div class="a cell b num" style="left:1572.3px;width:67.6px;top:734.9px;height:29.2px;line-height:29.2px">4,896</div>
<div class="a cell b num" style="left:1643.1px;width:68.2px;top:734.9px;height:29.2px;line-height:29.2px">4,896</div>
<div class="a cell b num" style="left:1714.5px;width:67.6px;top:734.9px;height:29.2px;line-height:29.2px">4,896</div>
<div class="a cell b num" style="left:1785.3px;width:68.2px;top:734.9px;height:29.2px;line-height:29.2px">4,898</div>
<div class="a cell b num" style="left:1856.7px;width:82.9px;top:734.9px;height:29.2px;line-height:29.2px">57,848</div>
<div class="a cell b" style="left:145px;top:764.1px;height:29.2px;line-height:29.2px"><svg class="xb" width="16" height="16" viewBox="0 0 16 16"><rect x="0.7" y="0.7" width="14.6" height="14.6" fill="none" stroke="#6b809d" stroke-width="1.4"/><path d="M4.2 8H11.8M8 4.2V11.8" stroke="#7d8ea7" stroke-width="1.6"/></svg><span class="ft">0.34</span></div>
<div class="a cell b tx" style="left:226.5px;top:764.1px;height:29.2px;line-height:29.2px">NP001</div>
<div class="a cell b tx" style="left:394px;top:764.1px;height:29.2px;line-height:29.2px">Nurse Practitioner 1 (NP1)</div>
<div class="a cell b tx" style="left:749.5px;top:764.1px;height:29.2px;line-height:29.2px">Total Compensation</div>
<div class="a cell b num" style="left:1021.3px;width:58.9px;top:764.1px;height:29.2px;line-height:29.2px">2,606</div>
<div class="a cell b num" style="left:1083.4px;width:58.9px;top:764.1px;height:29.2px;line-height:29.2px">2,606</div>
<div class="a cell b num" style="left:1145.5px;width:68.5px;top:764.1px;height:29.2px;line-height:29.2px">2,606</div>
<div class="a cell b num" style="left:1217.2px;width:67.7px;top:764.1px;height:29.2px;line-height:29.2px">2,522</div>
<div class="a cell b num" style="left:1288.1px;width:67.9px;top:764.1px;height:29.2px;line-height:29.2px">2,480</div>
<div class="a cell b num" style="left:1359.2px;width:67.7px;top:764.1px;height:29.2px;line-height:29.2px">2,480</div>
<div class="a cell b num" style="left:1430.1px;width:68.3px;top:764.1px;height:29.2px;line-height:29.2px">919</div>
<div class="a cell b num" style="left:1501.6px;width:67.5px;top:764.1px;height:29.2px;line-height:29.2px">1,923</div>
<div class="a cell b num" style="left:1572.3px;width:67.6px;top:764.1px;height:29.2px;line-height:29.2px">919</div>
<div class="a cell b num" style="left:1643.1px;width:68.2px;top:764.1px;height:29.2px;line-height:29.2px">2,592</div>
<div class="a cell b num" style="left:1714.5px;width:67.6px;top:764.1px;height:29.2px;line-height:29.2px">2,592</div>
<div class="a cell b num" style="left:1785.3px;width:68.2px;top:764.1px;height:29.2px;line-height:29.2px">2,592</div>
<div class="a cell b num" style="left:1856.7px;width:82.9px;top:764.1px;height:29.2px;line-height:29.2px">26,837</div>
<div class="a cell b" style="left:145px;top:793.3px;height:29.2px;line-height:29.2px"><svg class="xb" width="16" height="16" viewBox="0 0 16 16"><rect x="0.7" y="0.7" width="14.6" height="14.6" fill="none" stroke="#6b809d" stroke-width="1.4"/><path d="M4.2 8H11.8" stroke="#7d8ea7" stroke-width="1.6"/></svg><span class="ft">0.9</span></div>
<div class="a cell b tx" style="left:226.5px;top:793.3px;height:29.2px;line-height:29.2px">EM001 (exempt)</div>
<div class="a cell b tx" style="left:394px;top:793.3px;height:29.2px;line-height:29.2px">Rob Gandee (VP of Business Development)</div>
<div class="a cell b tx" style="left:749.5px;top:793.3px;height:29.2px;line-height:29.2px">Total Compensation</div>
<div class="a cell b num" style="left:1021.3px;width:58.9px;top:793.3px;height:29.2px;line-height:29.2px">9,079</div>
<div class="a cell b num" style="left:1083.4px;width:58.9px;top:793.3px;height:29.2px;line-height:29.2px">8,752</div>
<div class="a cell b num" style="left:1145.5px;width:68.5px;top:793.3px;height:29.2px;line-height:29.2px">8,701</div>
<div class="a cell b num" style="left:1217.2px;width:67.7px;top:793.3px;height:29.2px;line-height:29.2px">8,659</div>
<div class="a cell b num" style="left:1288.1px;width:67.9px;top:793.3px;height:29.2px;line-height:29.2px">8,659</div>
<div class="a cell b num" style="left:1359.2px;width:67.7px;top:793.3px;height:29.2px;line-height:29.2px">8,701</div>
<div class="a cell b num" style="left:1430.1px;width:68.3px;top:793.3px;height:29.2px;line-height:29.2px">9,048</div>
<div class="a cell b num" style="left:1501.6px;width:67.5px;top:793.3px;height:29.2px;line-height:29.2px">9,048</div>
<div class="a cell b num" style="left:1572.3px;width:67.6px;top:793.3px;height:29.2px;line-height:29.2px">9,090</div>
<div class="a cell b num" style="left:1643.1px;width:68.2px;top:793.3px;height:29.2px;line-height:29.2px">9,048</div>
<div class="a cell b num" style="left:1714.5px;width:67.6px;top:793.3px;height:29.2px;line-height:29.2px">9,048</div>
<div class="a cell b num" style="left:1785.3px;width:68.2px;top:793.3px;height:29.2px;line-height:29.2px">9,089</div>
<div class="a cell b num" style="left:1856.7px;width:82.9px;top:793.3px;height:29.2px;line-height:29.2px">106,922</div>
<div class="a cell tx" style="left:749.5px;top:822.5px;height:29.2px;line-height:29.2px">Salary (6000)</div>
<div class="a cell num" style="left:1021.3px;width:58.9px;top:822.5px;height:29.2px;line-height:29.2px">3,500</div>
<div class="a cell num" style="left:1083.4px;width:58.9px;top:822.5px;height:29.2px;line-height:29.2px">3,500</div>
<div class="a cell num" style="left:1145.5px;width:68.5px;top:822.5px;height:29.2px;line-height:29.2px">3,500</div>
<div class="a cell num" style="left:1217.2px;width:67.7px;top:822.5px;height:29.2px;line-height:29.2px">3,500</div>
<div class="a cell num" style="left:1288.1px;width:67.9px;top:822.5px;height:29.2px;line-height:29.2px">3,500</div>
<div class="a cell num" style="left:1359.2px;width:67.7px;top:822.5px;height:29.2px;line-height:29.2px">3,500</div>
<div class="a cell num" style="left:1430.1px;width:68.3px;top:822.5px;height:29.2px;line-height:29.2px">3,675</div>
<div class="a cell num" style="left:1501.6px;width:67.5px;top:822.5px;height:29.2px;line-height:29.2px">3,675</div>
<div class="a cell num" style="left:1572.3px;width:67.6px;top:822.5px;height:29.2px;line-height:29.2px">3,675</div>
<div class="a cell num" style="left:1643.1px;width:68.2px;top:822.5px;height:29.2px;line-height:29.2px">3,675</div>
<div class="a cell num" style="left:1714.5px;width:67.6px;top:822.5px;height:29.2px;line-height:29.2px">3,675</div>
<div class="a cell num" style="left:1785.3px;width:68.2px;top:822.5px;height:29.2px;line-height:29.2px">3,675</div>
<div class="a cell b num" style="left:1856.7px;width:82.9px;top:822.5px;height:29.2px;line-height:29.2px">43,050</div>
<div class="a cell tx" style="left:749.5px;top:851.7px;height:29.2px;line-height:29.2px">Salary (6010)</div>
<div class="a cell num" style="left:1021.3px;width:58.9px;top:851.7px;height:29.2px;line-height:29.2px">4,375</div>
<div class="a cell num" style="left:1083.4px;width:58.9px;top:851.7px;height:29.2px;line-height:29.2px">4,375</div>
<div class="a cell num" style="left:1145.5px;width:68.5px;top:851.7px;height:29.2px;line-height:29.2px">4,375</div>
<div class="a cell num" style="left:1217.2px;width:67.7px;top:851.7px;height:29.2px;line-height:29.2px">4,375</div>
<div class="a cell num" style="left:1288.1px;width:67.9px;top:851.7px;height:29.2px;line-height:29.2px">4,375</div>
<div class="a cell num" style="left:1359.2px;width:67.7px;top:851.7px;height:29.2px;line-height:29.2px">4,375</div>
<div class="a cell num" style="left:1430.1px;width:68.3px;top:851.7px;height:29.2px;line-height:29.2px">4,594</div>
<div class="a cell num" style="left:1501.6px;width:67.5px;top:851.7px;height:29.2px;line-height:29.2px">4,594</div>
<div class="a cell num" style="left:1572.3px;width:67.6px;top:851.7px;height:29.2px;line-height:29.2px">4,594</div>
<div class="a cell num" style="left:1643.1px;width:68.2px;top:851.7px;height:29.2px;line-height:29.2px">4,594</div>
<div class="a cell num" style="left:1714.5px;width:67.6px;top:851.7px;height:29.2px;line-height:29.2px">4,594</div>
<div class="a cell num" style="left:1785.3px;width:68.2px;top:851.7px;height:29.2px;line-height:29.2px">4,593</div>
<div class="a cell b num" style="left:1856.7px;width:82.9px;top:851.7px;height:29.2px;line-height:29.2px">53,813</div>
<div class="a cell tx" style="left:749.5px;top:880.9px;height:29.2px;line-height:29.2px">FUTA (6055)</div>
<div class="a cell num" style="left:1021.3px;width:58.9px;top:880.9px;height:29.2px;line-height:29.2px">420</div>
<div class="a cell num" style="left:1083.4px;width:58.9px;top:880.9px;height:29.2px;line-height:29.2px">-</div>
<div class="a cell num" style="left:1145.5px;width:68.5px;top:880.9px;height:29.2px;line-height:29.2px">-</div>
<div class="a cell num" style="left:1217.2px;width:67.7px;top:880.9px;height:29.2px;line-height:29.2px">-</div>
<div class="a cell num" style="left:1288.1px;width:67.9px;top:880.9px;height:29.2px;line-height:29.2px">-</div>
<div class="a cell num" style="left:1359.2px;width:67.7px;top:880.9px;height:29.2px;line-height:29.2px">-</div>
<div class="a cell num" style="left:1430.1px;width:68.3px;top:880.9px;height:29.2px;line-height:29.2px">-</div>
<div class="a cell num" style="left:1501.6px;width:67.5px;top:880.9px;height:29.2px;line-height:29.2px">-</div>
<div class="a cell num" style="left:1572.3px;width:67.6px;top:880.9px;height:29.2px;line-height:29.2px">-</div>
<div class="a cell num" style="left:1643.1px;width:68.2px;top:880.9px;height:29.2px;line-height:29.2px">-</div>
<div class="a cell num" style="left:1714.5px;width:67.6px;top:880.9px;height:29.2px;line-height:29.2px">-</div>
<div class="a cell num" style="left:1785.3px;width:68.2px;top:880.9px;height:29.2px;line-height:29.2px">-</div>
<div class="a cell b num" style="left:1856.7px;width:82.9px;top:880.9px;height:29.2px;line-height:29.2px">420</div>
<div class="a cell tx" style="left:749.5px;top:910.1px;height:29.2px;line-height:29.2px">Single Health Insurance (6060)</div>
<div class="a cell num" style="left:1021.3px;width:58.9px;top:910.1px;height:29.2px;line-height:29.2px">249</div>
<div class="a cell num" style="left:1083.4px;width:58.9px;top:910.1px;height:29.2px;line-height:29.2px">249</div>
<div class="a cell num" style="left:1145.5px;width:68.5px;top:910.1px;height:29.2px;line-height:29.2px">249</div>
<div class="a cell num" style="left:1217.2px;width:67.7px;top:910.1px;height:29.2px;line-height:29.2px">249</div>
<div class="a cell num" style="left:1288.1px;width:67.9px;top:910.1px;height:29.2px;line-height:29.2px">249</div>
<div class="a cell num" style="left:1359.2px;width:67.7px;top:910.1px;height:29.2px;line-height:29.2px">249</div>
<div class="a cell num" style="left:1430.1px;width:68.3px;top:910.1px;height:29.2px;line-height:29.2px">249</div>
<div class="a cell num" style="left:1501.6px;width:67.5px;top:910.1px;height:29.2px;line-height:29.2px">249</div>
<div class="a cell num" style="left:1572.3px;width:67.6px;top:910.1px;height:29.2px;line-height:29.2px">249</div>
<div class="a cell num" style="left:1643.1px;width:68.2px;top:910.1px;height:29.2px;line-height:29.2px">249</div>
<div class="a cell num" style="left:1714.5px;width:67.6px;top:910.1px;height:29.2px;line-height:29.2px">249</div>
<div class="a cell num" style="left:1785.3px;width:68.2px;top:910.1px;height:29.2px;line-height:29.2px">249</div>
<div class="a cell b num" style="left:1856.7px;width:82.9px;top:910.1px;height:29.2px;line-height:29.2px">2,988</div>
<div class="a cell tx" style="left:749.5px;top:939.3px;height:29.2px;line-height:29.2px">Social Security (6011)</div>
<div class="a cell num" style="left:1021.3px;width:58.9px;top:939.3px;height:29.2px;line-height:29.2px">535</div>
<div class="a cell num" style="left:1083.4px;width:58.9px;top:939.3px;height:29.2px;line-height:29.2px">628</div>
<div class="a cell num" style="left:1145.5px;width:68.5px;top:939.3px;height:29.2px;line-height:29.2px">577</div>
<div class="a cell num" style="left:1217.2px;width:67.7px;top:939.3px;height:29.2px;line-height:29.2px">535</div>
<div class="a cell num" style="left:1288.1px;width:67.9px;top:939.3px;height:29.2px;line-height:29.2px">535</div>
<div class="a cell num" style="left:1359.2px;width:67.7px;top:939.3px;height:29.2px;line-height:29.2px">577</div>
<div class="a cell num" style="left:1430.1px;width:68.3px;top:939.3px;height:29.2px;line-height:29.2px">530</div>
<div class="a cell num" style="left:1501.6px;width:67.5px;top:939.3px;height:29.2px;line-height:29.2px">530</div>
<div class="a cell num" style="left:1572.3px;width:67.6px;top:939.3px;height:29.2px;line-height:29.2px">572</div>
<div class="a cell num" style="left:1643.1px;width:68.2px;top:939.3px;height:29.2px;line-height:29.2px">530</div>
<div class="a cell num" style="left:1714.5px;width:67.6px;top:939.3px;height:29.2px;line-height:29.2px">530</div>
<div class="a cell num" style="left:1785.3px;width:68.2px;top:939.3px;height:29.2px;line-height:29.2px">572</div>
<div class="a cell b num" style="left:1856.7px;width:82.9px;top:939.3px;height:29.2px;line-height:29.2px">6,651</div>
<div class="a cell b" style="left:145px;top:968.5px;height:29.2px;line-height:29.2px"><svg class="xb" width="16" height="16" viewBox="0 0 16 16"><rect x="0.7" y="0.7" width="14.6" height="14.6" fill="none" stroke="#6b809d" stroke-width="1.4"/><path d="M4.2 8H11.8M8 4.2V11.8" stroke="#7d8ea7" stroke-width="1.6"/></svg><span class="ft">1</span></div>
<div class="a cell b tx" style="left:226.5px;top:968.5px;height:29.2px;line-height:29.2px">4592</div>
<div class="a cell b tx" style="left:394px;top:968.5px;height:29.2px;line-height:29.2px">Ron Kelly (President)</div>
<div class="a cell b tx" style="left:749.5px;top:968.5px;height:29.2px;line-height:29.2px">Total Compensation</div>
<div class="a cell b num" style="left:1021.3px;width:58.9px;top:968.5px;height:29.2px;line-height:29.2px">9,520</div>
<div class="a cell b num" style="left:1083.4px;width:58.9px;top:968.5px;height:29.2px;line-height:29.2px">9,100</div>
<div class="a cell b num" style="left:1145.5px;width:68.5px;top:968.5px;height:29.2px;line-height:29.2px">9,100</div>
<div class="a cell b num" style="left:1217.2px;width:67.7px;top:968.5px;height:29.2px;line-height:29.2px">9,100</div>
<div class="a cell b num" style="left:1288.1px;width:67.9px;top:968.5px;height:29.2px;line-height:29.2px">9,100</div>
<div class="a cell b num" style="left:1359.2px;width:67.7px;top:968.5px;height:29.2px;line-height:29.2px">9,100</div>
<div class="a cell b num" style="left:1430.1px;width:68.3px;top:968.5px;height:29.2px;line-height:29.2px">9,543</div>
<div class="a cell b num" style="left:1501.6px;width:67.5px;top:968.5px;height:29.2px;line-height:29.2px">9,543</div>
<div class="a cell b num" style="left:1572.3px;width:67.6px;top:968.5px;height:29.2px;line-height:29.2px">9,543</div>
<div class="a cell b num" style="left:1643.1px;width:68.2px;top:968.5px;height:29.2px;line-height:29.2px">9,543</div>
<div class="a cell b num" style="left:1714.5px;width:67.6px;top:968.5px;height:29.2px;line-height:29.2px">9,543</div>
<div class="a cell b num" style="left:1785.3px;width:68.2px;top:968.5px;height:29.2px;line-height:29.2px">9,540</div>
<div class="a cell b num" style="left:1856.7px;width:82.9px;top:968.5px;height:29.2px;line-height:29.2px">112,275</div>
<div class="a cell b" style="left:145px;top:997.7px;height:29.2px;line-height:29.2px"><svg class="xb" width="16" height="16" viewBox="0 0 16 16"><rect x="0.7" y="0.7" width="14.6" height="14.6" fill="none" stroke="#6b809d" stroke-width="1.4"/><path d="M4.2 8H11.8M8 4.2V11.8" stroke="#7d8ea7" stroke-width="1.6"/></svg><span class="ft">0.04</span></div>
<div class="a cell b tx" style="left:226.5px;top:997.7px;height:29.2px;line-height:29.2px">EM0045</div>
<div class="a cell b tx" style="left:394px;top:997.7px;height:29.2px;line-height:29.2px">Serena Williams (Sales Rep)</div>
<div class="a cell b tx" style="left:749.5px;top:997.7px;height:29.2px;line-height:29.2px">Total Compensation</div>
<div class="a cell b num" style="left:1021.3px;width:58.9px;top:997.7px;height:29.2px;line-height:29.2px">250</div>
<div class="a cell b num" style="left:1083.4px;width:58.9px;top:997.7px;height:29.2px;line-height:29.2px">615</div>
<div class="a cell b num" style="left:1145.5px;width:68.5px;top:997.7px;height:29.2px;line-height:29.2px">687</div>
<div class="a cell b num" style="left:1217.2px;width:67.7px;top:997.7px;height:29.2px;line-height:29.2px">979</div>
<div class="a cell b num" style="left:1288.1px;width:67.9px;top:997.7px;height:29.2px;line-height:29.2px">250</div>
<div class="a cell b num" style="left:1359.2px;width:67.7px;top:997.7px;height:29.2px;line-height:29.2px">1,344</div>
<div class="a cell b num" style="left:1430.1px;width:68.3px;top:997.7px;height:29.2px;line-height:29.2px">3,313</div>
<div class="a cell b num" style="left:1501.6px;width:67.5px;top:997.7px;height:29.2px;line-height:29.2px">632</div>
<div class="a cell b num" style="left:1572.3px;width:67.6px;top:997.7px;height:29.2px;line-height:29.2px">785</div>
<div class="a cell b num" style="left:1643.1px;width:68.2px;top:997.7px;height:29.2px;line-height:29.2px">632</div>
<div class="a cell b num" style="left:1714.5px;width:67.6px;top:997.7px;height:29.2px;line-height:29.2px">632</div>
<div class="a cell b num" style="left:1785.3px;width:68.2px;top:997.7px;height:29.2px;line-height:29.2px">256</div>
<div class="a cell b num" style="left:1856.7px;width:82.9px;top:997.7px;height:29.2px;line-height:29.2px">10,375</div>
<div class="a cell b" style="left:145px;top:1026.9px;height:29.2px;line-height:29.2px"><svg class="xb" width="16" height="16" viewBox="0 0 16 16"><rect x="0.7" y="0.7" width="14.6" height="14.6" fill="none" stroke="#6b809d" stroke-width="1.4"/><path d="M4.2 8H11.8M8 4.2V11.8" stroke="#7d8ea7" stroke-width="1.6"/></svg><span class="ft">1</span></div>
<div class="a cell b tx" style="left:226.5px;top:1026.9px;height:29.2px;line-height:29.2px">SE1</div>
<div class="a cell b tx" style="left:394px;top:1026.9px;height:29.2px;line-height:29.2px">Software Engineer 1 (Software Engineer)</div>
<div class="a cell b tx" style="left:749.5px;top:1026.9px;height:29.2px;line-height:29.2px">Total Compensation</div>
<div class="a cell b num" style="left:1021.3px;width:58.9px;top:1026.9px;height:29.2px;line-height:29.2px">11,925</div>
<div class="a cell b num" style="left:1083.4px;width:58.9px;top:1026.9px;height:29.2px;line-height:29.2px">11,505</div>
<div class="a cell b num" style="left:1145.5px;width:68.5px;top:1026.9px;height:29.2px;line-height:29.2px">11,505</div>
<div class="a cell b num" style="left:1217.2px;width:67.7px;top:1026.9px;height:29.2px;line-height:29.2px">11,505</div>
<div class="a cell b num" style="left:1288.1px;width:67.9px;top:1026.9px;height:29.2px;line-height:29.2px">11,505</div>
<div class="a cell b num" style="left:1359.2px;width:67.7px;top:1026.9px;height:29.2px;line-height:29.2px">11,505</div>
<div class="a cell b num" style="left:1430.1px;width:68.3px;top:1026.9px;height:29.2px;line-height:29.2px">12,079</div>
<div class="a cell b num" style="left:1501.6px;width:67.5px;top:1026.9px;height:29.2px;line-height:29.2px">12,079</div>
<div class="a cell b num" style="left:1572.3px;width:67.6px;top:1026.9px;height:29.2px;line-height:29.2px">12,079</div>
<div class="a cell b num" style="left:1643.1px;width:68.2px;top:1026.9px;height:29.2px;line-height:29.2px">12,079</div>
<div class="a cell b num" style="left:1714.5px;width:67.6px;top:1026.9px;height:29.2px;line-height:29.2px">12,079</div>
<div class="a cell b num" style="left:1785.3px;width:68.2px;top:1026.9px;height:29.2px;line-height:29.2px">12,088</div>
<div class="a cell b num" style="left:1856.7px;width:82.9px;top:1026.9px;height:29.2px;line-height:29.2px">141,933</div>
<div class="a cell b" style="left:145px;top:1056.1px;height:29.2px;line-height:29.2px"><svg class="xb" width="16" height="16" viewBox="0 0 16 16"><rect x="0.7" y="0.7" width="14.6" height="14.6" fill="none" stroke="#6b809d" stroke-width="1.4"/><path d="M4.2 8H11.8M8 4.2V11.8" stroke="#7d8ea7" stroke-width="1.6"/></svg><span class="ft">0</span></div>
<div class="a cell b tx" style="left:226.5px;top:1056.1px;height:29.2px;line-height:29.2px">TBH1</div>
<div class="a cell b tx" style="left:394px;top:1056.1px;height:29.2px;line-height:29.2px">TBH1 (VP of Finance)</div>
<div class="a cell b tx" style="left:749.5px;top:1056.1px;height:29.2px;line-height:29.2px">Total Compensation</div>
<div class="a cell b num" style="left:1021.3px;width:58.9px;top:1056.1px;height:29.2px;line-height:29.2px">4,595</div>
<div class="a cell b num" style="left:1083.4px;width:58.9px;top:1056.1px;height:29.2px;line-height:29.2px">4,550</div>
<div class="a cell b num" style="left:1145.5px;width:68.5px;top:1056.1px;height:29.2px;line-height:29.2px">4,362</div>
<div class="a cell b num" style="left:1217.2px;width:67.7px;top:1056.1px;height:29.2px;line-height:29.2px">3,613</div>
<div class="a cell b num" style="left:1288.1px;width:67.9px;top:1056.1px;height:29.2px;line-height:29.2px">3,613</div>
<div class="a cell b num" style="left:1359.2px;width:67.7px;top:1056.1px;height:29.2px;line-height:29.2px">3,613</div>
<div class="a cell b num" style="left:1430.1px;width:68.3px;top:1056.1px;height:29.2px;line-height:29.2px">4,261</div>
<div class="a cell b num" style="left:1501.6px;width:67.5px;top:1056.1px;height:29.2px;line-height:29.2px">4,261</div>
<div class="a cell b num" style="left:1572.3px;width:67.6px;top:1056.1px;height:29.2px;line-height:29.2px">4,261</div>
<div class="a cell b num" style="left:1643.1px;width:68.2px;top:1056.1px;height:29.2px;line-height:29.2px">4,261</div>
<div class="a cell b num" style="left:1714.5px;width:67.6px;top:1056.1px;height:29.2px;line-height:29.2px">4,261</div>
<div class="a cell b num" style="left:1785.3px;width:68.2px;top:1056.1px;height:29.2px;line-height:29.2px">4,261</div>
<div class="a cell b num" style="left:1856.7px;width:82.9px;top:1056.1px;height:29.2px;line-height:29.2px">49,912</div>
<div class="a cell b" style="left:145px;top:1085.3px;height:29.2px;line-height:29.2px"><svg class="xb" width="16" height="16" viewBox="0 0 16 16"><rect x="0.7" y="0.7" width="14.6" height="14.6" fill="none" stroke="#6b809d" stroke-width="1.4"/><path d="M4.2 8H11.8M8 4.2V11.8" stroke="#7d8ea7" stroke-width="1.6"/></svg><span class="ft">13.6</span></div>
<div class="a cell b tx" style="left:226.5px;top:1085.3px;height:29.2px;line-height:29.2px">Total</div>
<div class="a cell b tx" style="left:394px;top:1085.3px;height:29.2px;line-height:29.2px">All Employees</div>
<div class="a cell b tx" style="left:749.5px;top:1085.3px;height:29.2px;line-height:29.2px">Total Compensation</div>
<div class="a cell b num" style="left:1021.3px;width:58.9px;top:1085.3px;height:29.2px;line-height:29.2px">97,686</div>
<div class="a cell b num" style="left:1083.4px;width:58.9px;top:1085.3px;height:29.2px;line-height:29.2px">95,031</div>
<div class="a cell b num" style="left:1145.5px;width:68.5px;top:1085.3px;height:29.2px;line-height:29.2px">135,634</div>
<div class="a cell b num" style="left:1217.2px;width:67.7px;top:1085.3px;height:29.2px;line-height:29.2px">134,720</div>
<div class="a cell b num" style="left:1288.1px;width:67.9px;top:1085.3px;height:29.2px;line-height:29.2px">133,949</div>
<div class="a cell b num" style="left:1359.2px;width:67.7px;top:1085.3px;height:29.2px;line-height:29.2px">143,050</div>
<div class="a cell b num" style="left:1430.1px;width:68.3px;top:1085.3px;height:29.2px;line-height:29.2px">150,976</div>
<div class="a cell b num" style="left:1501.6px;width:67.5px;top:1085.3px;height:29.2px;line-height:29.2px">148,878</div>
<div class="a cell b num" style="left:1572.3px;width:67.6px;top:1085.3px;height:29.2px;line-height:29.2px">148,069</div>
<div class="a cell b num" style="left:1643.1px;width:68.2px;top:1085.3px;height:29.2px;line-height:29.2px">149,547</div>
<div class="a cell b num" style="left:1714.5px;width:67.6px;top:1085.3px;height:29.2px;line-height:29.2px">149,547</div>
<div class="a cell b num" style="left:1785.3px;width:68.2px;top:1085.3px;height:29.2px;line-height:29.2px">157,554</div>
<div class="a cell b num" style="left:1856.7px;width:82.9px;top:1085.3px;height:29.2px;line-height:29.2px">1,644,641</div>

<!-- FOOTER -->
<div id="foot" class="a"></div>
<div class="a" style="left:28.5px;top:1288.7px;font-size:11.5px;font-weight:700;color:#e6e7ef;letter-spacing:0.35px;transform-origin:0 0;transform:scaleX(1.245);line-height:14px;white-space:nowrap">© 2026 BUDGYT. ALL RIGHTS RESERVED.</div>
<svg class="a" style="left:1135px;top:1280px" width="240" height="36" viewBox="0 0 240 36">
<path class="soc" d="M8.5 28 V17.5 H5.8 V13.3 H8.5 V10.6 C8.5 7 10.3 5.8 13.5 5.8 C14.8 5.8 15.6 5.9 16 6 V9.8 H14 C12.8 9.8 12.6 10.4 12.6 11.3 V13.3 H15.9 L15.4 17.5 H12.6 V28 Z"/>
<path class="soc" d="M60.8 12.3 C60.1 12.6 59.3 12.8 58.6 12.9 C59.4 12.4 60 11.7 60.3 10.8 C59.5 11.2 58.7 11.6 57.8 11.7 C57.1 10.9 56 10.4 54.9 10.4 C52.7 10.4 50.9 12.2 50.9 14.4 C50.9 14.7 50.9 15 51 15.3 C47.7 15.1 44.7 13.5 42.7 11.1 C42.3 11.7 42.1 12.4 42.1 13.1 C42.1 14.5 42.8 15.7 43.9 16.4 C43.2 16.4 42.6 16.2 42.1 15.9 V16 C42.1 17.9 43.5 19.6 45.3 19.9 C45 20 44.6 20.1 44.2 20.1 C44 20.1 43.7 20.1 43.5 20 C44 21.6 45.5 22.8 47.2 22.8 C45.8 23.9 44.1 24.5 42.2 24.5 C41.9 24.5 41.6 24.5 41.3 24.5 C43.1 25.6 45.2 26.3 47.4 26.3 C54.9 26.3 58.9 20.1 58.9 14.8 V14.3 C59.7 13.7 60.3 13.1 60.8 12.3 Z"/>
<circle class="soc" cx="87.1" cy="6.4" r="2.4"/>
<path class="soc" d="M85.2 10.6 H89 V23.8 H85.2 Z M91.5 10.6 H95.2 V12.4 C95.8 11.3 97.2 10.3 99.2 10.3 C103 10.3 103.6 12.8 103.6 16 V23.8 H99.8 V16.9 C99.8 15.3 99.7 13.7 97.8 13.7 C95.8 13.7 95.4 15.2 95.4 16.8 V23.8 H91.5 Z"/>
<rect x="126" y="6.2" width="17.6" height="17.6" rx="4.8" fill="none" stroke="#5d6b8c" stroke-width="1.7"/>
<circle cx="134.8" cy="15" r="4" fill="none" stroke="#5d6b8c" stroke-width="1.7"/>
<circle class="soc" cx="139.7" cy="10" r="1"/>
<path class="soc" d="M185.5 12 C185.4 13.9 184.1 16.5 181.5 19.8 C178.8 23.3 176.6 25 174.7 25 C173.6 25 172.6 24 171.8 21.9 L170.3 16.3 C169.8 14.2 169.2 13.2 168.6 13.2 C168.5 13.2 168 13.5 167.2 14.1 L166.4 13 C167.3 12.3 168.1 11.5 169 10.8 C170.2 9.8 171.1 9.2 171.7 9.2 C173.1 9.1 174 10 174.3 12.1 C174.7 14.3 174.9 15.7 175 16.2 C175.4 18 175.9 18.9 176.4 18.9 C176.8 18.9 177.4 18.3 178.3 17 C179.1 15.7 179.6 14.7 179.6 14 C179.7 12.9 179.3 12.3 178.3 12.3 C177.9 12.3 177.4 12.4 176.9 12.6 C177.9 9.4 179.8 7.9 182.6 8 C184.7 8 185.6 9.4 185.5 12 Z"/>
<path class="soc" d="M210.5 9.8 C210.5 9.8 215.8 9.2 221 9.2 C226.3 9.2 231.2 9.8 231.2 9.8 C232.4 10 233.2 10.8 233.3 12 C233.3 12 233.6 14.5 233.6 17.2 C233.6 19.9 233.3 22.3 233.3 22.3 C233.2 23.5 232.4 24.4 231.2 24.6 C231.2 24.6 226.3 25.1 221 25.1 C215.8 25.1 210.8 24.6 210.8 24.6 C209.6 24.4 208.8 23.5 208.7 22.3 C208.7 22.3 208.4 19.9 208.4 17.2 C208.4 14.5 208.7 12 208.7 12 C208.8 10.8 209.3 10 210.5 9.8 Z"/>
<path d="M218.8 14 V20.5 L223.8 17.2 Z" fill="#0f1229"/>
</svg>

<!-- CHAT PILL -->
<div class="a" style="left:2173.2px;top:1222.5px;width:287.7px;height:57px;border:1.3px solid #c2c2c2;border-radius:29px;background:#fff;box-shadow:0 1px 2px rgba(0,0,0,0.12)"></div>
<svg class="a" style="left:2186px;top:1238px" width="28" height="26" viewBox="0 0 28 26">
<path d="M13.6 1.8 Q14.8 11.7 25.3 12.9 Q14.8 14.1 13.6 24 Q12.4 14.1 1.9 12.9 Q12.4 11.7 13.6 1.8 Z" fill="#1b1b1b"/>
</svg>
<div class="a" style="left:2223.5px;top:1231.7px;font-size:20.6px;color:#111;line-height:40px;white-space:nowrap">Ask me anything...</div>
<svg class="a" style="left:2422px;top:1238px" width="26" height="26" viewBox="0 0 26 26">
<path d="M7.8 14.4 L4.9 11.3 C4.2 10.6 4.5 9.6 5.5 9.3 L20.2 5.3 C21.2 5 22 5.8 21.8 6.8 L17.5 20.6 C17.2 21.6 16.2 21.9 15.5 21.2 L10.9 16.6 L15.8 10.4" fill="none" stroke="#111" stroke-width="1.75" stroke-linejoin="round" stroke-linecap="round"/>
</svg>
</body></html>
